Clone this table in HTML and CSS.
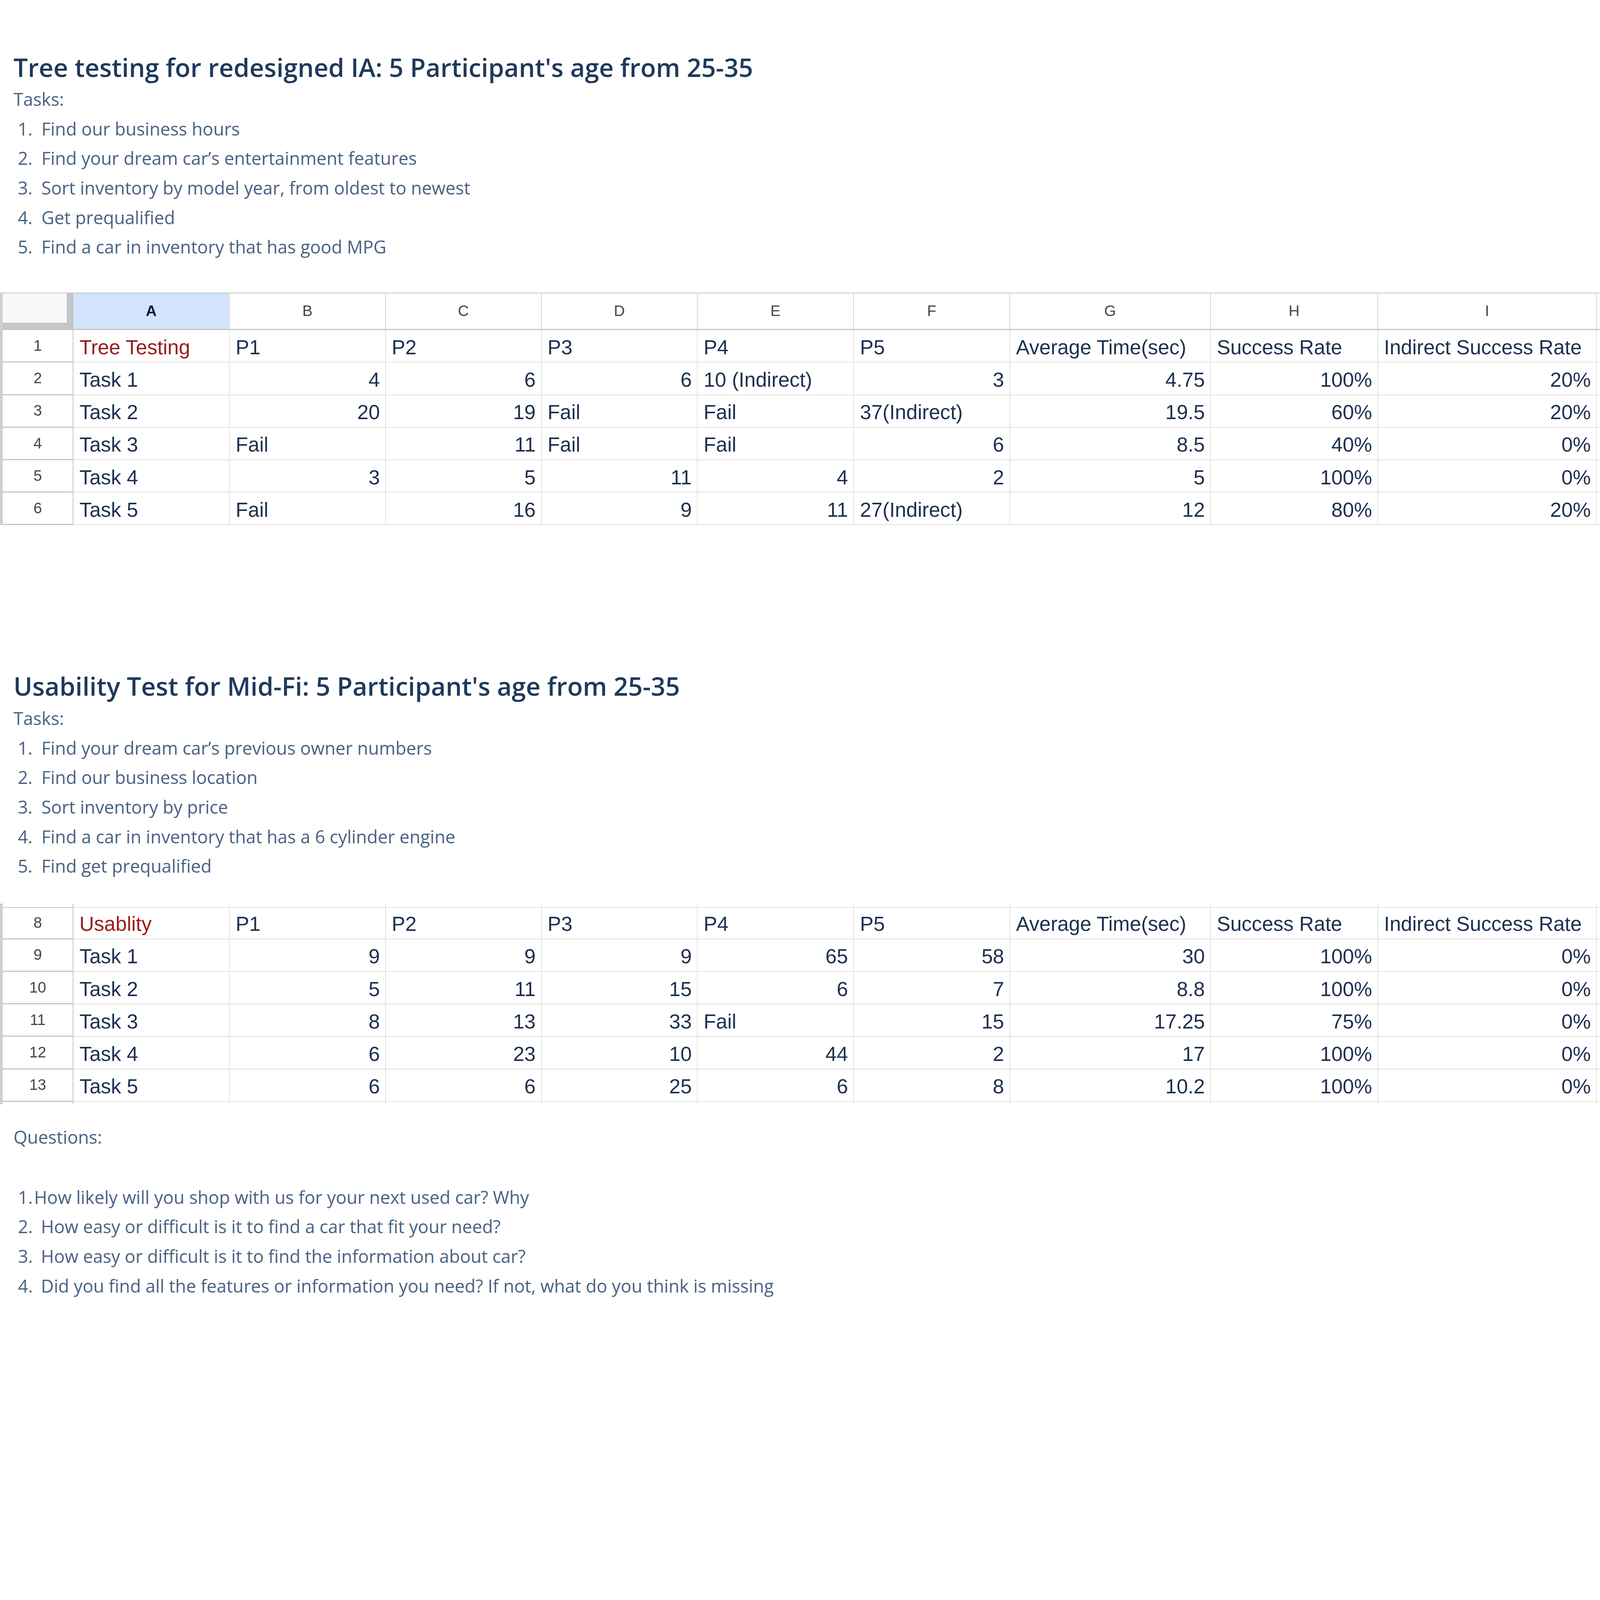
FILE: index.html
```html
<!DOCTYPE html>
<html lang="en">
<head>
<meta charset="utf-8">
<title>Tree testing and usability results</title>
<link rel="stylesheet" href="styles.css">
</head>
<body>
<main class="page">
  <section class="intro intro-tree">
    <h1 class="title">Tree testing for redesigned IA: 5 Participant's age from 25-35</h1>
    <p class="label">Tasks:</p>
    <ol class="steps">
      <li><span class="num">1.</span><span>Find our business hours</span></li>
      <li><span class="num">2.</span><span>Find your dream car’s entertainment features</span></li>
      <li><span class="num">3.</span><span>Sort inventory by model year, from oldest to newest</span></li>
      <li><span class="num">4.</span><span>Get prequalified</span></li>
      <li><span class="num">5.</span><span>Find a car in inventory that has good MPG</span></li>
    </ol>
  </section>

  <div class="sheet sheet-tree">
    <div class="ch corner"></div>
    <div class="ch sel">A</div>
    <div class="ch">B</div>
    <div class="ch">C</div>
    <div class="ch">D</div>
    <div class="ch">E</div>
    <div class="ch">F</div>
    <div class="ch">G</div>
    <div class="ch">H</div>
    <div class="ch">I</div>
    <div class="ch j"></div>

    <div class="c rn">1</div>
    <div class="c red">Tree Testing</div>
    <div class="c">P1</div>
    <div class="c">P2</div>
    <div class="c">P3</div>
    <div class="c">P4</div>
    <div class="c">P5</div>
    <div class="c">Average Time(sec)</div>
    <div class="c">Success Rate</div>
    <div class="c">Indirect Success Rate</div>
    <div class="c j"></div>

    <div class="c rn">2</div>
    <div class="c">Task 1</div>
    <div class="c r">4</div>
    <div class="c r">6</div>
    <div class="c r">6</div>
    <div class="c">10 (Indirect)</div>
    <div class="c r">3</div>
    <div class="c r">4.75</div>
    <div class="c r">100%</div>
    <div class="c r">20%</div>
    <div class="c j"></div>

    <div class="c rn">3</div>
    <div class="c">Task 2</div>
    <div class="c r">20</div>
    <div class="c r">19</div>
    <div class="c">Fail</div>
    <div class="c">Fail</div>
    <div class="c">37(Indirect)</div>
    <div class="c r">19.5</div>
    <div class="c r">60%</div>
    <div class="c r">20%</div>
    <div class="c j"></div>

    <div class="c rn">4</div>
    <div class="c">Task 3</div>
    <div class="c">Fail</div>
    <div class="c r">11</div>
    <div class="c">Fail</div>
    <div class="c">Fail</div>
    <div class="c r">6</div>
    <div class="c r">8.5</div>
    <div class="c r">40%</div>
    <div class="c r">0%</div>
    <div class="c j"></div>

    <div class="c rn">5</div>
    <div class="c">Task 4</div>
    <div class="c r">3</div>
    <div class="c r">5</div>
    <div class="c r">11</div>
    <div class="c r">4</div>
    <div class="c r">2</div>
    <div class="c r">5</div>
    <div class="c r">100%</div>
    <div class="c r">0%</div>
    <div class="c j"></div>

    <div class="c rn">6</div>
    <div class="c">Task 5</div>
    <div class="c">Fail</div>
    <div class="c r">16</div>
    <div class="c r">9</div>
    <div class="c r">11</div>
    <div class="c">27(Indirect)</div>
    <div class="c r">12</div>
    <div class="c r">80%</div>
    <div class="c r">20%</div>
    <div class="c j"></div>
  </div>

  <section class="intro intro-usability">
    <h1 class="title">Usability Test for Mid-Fi: 5 Participant's age from 25-35</h1>
    <p class="label">Tasks:</p>
    <ol class="steps">
      <li><span class="num">1.</span><span>Find your dream car’s previous owner numbers</span></li>
      <li><span class="num">2.</span><span>Find our business location</span></li>
      <li><span class="num">3.</span><span>Sort inventory by price</span></li>
      <li><span class="num">4.</span><span>Find a car in inventory that has a 6 cylinder engine</span></li>
      <li><span class="num">5.</span><span>Find get prequalified</span></li>
    </ol>
  </section>

  <div class="sheet sheet-usability">
    <div class="stub rn-stub"></div>
    <div class="stub"></div>
    <div class="stub"></div>
    <div class="stub"></div>
    <div class="stub"></div>
    <div class="stub"></div>
    <div class="stub"></div>
    <div class="stub"></div>
    <div class="stub"></div>
    <div class="stub"></div>
    <div class="stub j"></div>

    <div class="c rn first">8</div>
    <div class="c red first">Usablity</div>
    <div class="c first">P1</div>
    <div class="c first">P2</div>
    <div class="c first">P3</div>
    <div class="c first">P4</div>
    <div class="c first">P5</div>
    <div class="c first">Average Time(sec)</div>
    <div class="c first">Success Rate</div>
    <div class="c first">Indirect Success Rate</div>
    <div class="c j first"></div>

    <div class="c rn">9</div>
    <div class="c">Task 1</div>
    <div class="c r">9</div>
    <div class="c r">9</div>
    <div class="c r">9</div>
    <div class="c r">65</div>
    <div class="c r">58</div>
    <div class="c r">30</div>
    <div class="c r">100%</div>
    <div class="c r">0%</div>
    <div class="c j"></div>

    <div class="c rn">10</div>
    <div class="c">Task 2</div>
    <div class="c r">5</div>
    <div class="c r">11</div>
    <div class="c r">15</div>
    <div class="c r">6</div>
    <div class="c r">7</div>
    <div class="c r">8.8</div>
    <div class="c r">100%</div>
    <div class="c r">0%</div>
    <div class="c j"></div>

    <div class="c rn">11</div>
    <div class="c">Task 3</div>
    <div class="c r">8</div>
    <div class="c r">13</div>
    <div class="c r">33</div>
    <div class="c">Fail</div>
    <div class="c r">15</div>
    <div class="c r">17.25</div>
    <div class="c r">75%</div>
    <div class="c r">0%</div>
    <div class="c j"></div>

    <div class="c rn">12</div>
    <div class="c">Task 4</div>
    <div class="c r">6</div>
    <div class="c r">23</div>
    <div class="c r">10</div>
    <div class="c r">44</div>
    <div class="c r">2</div>
    <div class="c r">17</div>
    <div class="c r">100%</div>
    <div class="c r">0%</div>
    <div class="c j"></div>

    <div class="c rn">13</div>
    <div class="c">Task 5</div>
    <div class="c r">6</div>
    <div class="c r">6</div>
    <div class="c r">25</div>
    <div class="c r">6</div>
    <div class="c r">8</div>
    <div class="c r">10.2</div>
    <div class="c r">100%</div>
    <div class="c r">0%</div>
    <div class="c j"></div>

    <div class="stub short rn-stub"></div>
    <div class="stub short"></div>
    <div class="stub short"></div>
    <div class="stub short"></div>
    <div class="stub short"></div>
    <div class="stub short"></div>
    <div class="stub short"></div>
    <div class="stub short"></div>
    <div class="stub short"></div>
    <div class="stub short"></div>
    <div class="stub short j"></div>
  </div>

  <section class="questions">
    <p class="label">Questions:</p>
    <ol class="steps q-steps">
      <li><span class="num tight">1.</span><span>How likely will you shop with us for your next used car? Why</span></li>
      <li><span class="num">2.</span><span>How easy or difficult is it to find a car that fit your need?</span></li>
      <li><span class="num">3.</span><span>How easy or difficult is it to find the information about car?</span></li>
      <li><span class="num">4.</span><span>Did you find all the features or information you need? If not, what do you think is missing</span></li>
    </ol>
  </section>
</main>
</body>
</html>
```

FILE: styles.css
```css
/* 1rem = 100 px of the 6766px-wide design, whatever the viewport is */
html {
  font-size: calc(100vw / 67.66);
  margin: 0;
  padding: 0;
  background: #ffffff;
}

body {
  margin: 0;
  padding: 0;
  background: #ffffff;
}

.page {
  width: 100%;
  font-family: "Open Sans", "Liberation Sans", Arial, sans-serif;
}

/* ---------- prose sections ---------- */
.intro {
  padding-left: 0.57rem;
}

.intro-tree {
  padding-top: 2.19rem;
}

.intro-usability {
  margin-top: 6.16rem;
}

.title {
  margin: 0;
  font-size: 1.075rem;
  line-height: 1.3rem;
  font-weight: 600;
  color: #1e395c;
  white-space: nowrap;
}

.label {
  margin: 0.08rem 0 0;
  font-size: 0.75rem;
  line-height: 1.25rem;
  color: #4a6283;
  white-space: nowrap;
}

.steps {
  margin: 0;
  padding: 0 0 0 0.18rem;
  list-style: none;
  font-size: 0.75rem;
  line-height: 1.25rem;
  color: #4a6283;
}

.steps li {
  display: flex;
  white-space: nowrap;
}

.steps .num {
  width: 1.0rem;
  flex: none;
}

.questions {
  margin-top: 0.76rem;
  padding-left: 0.57rem;
}

.questions .label {
  margin: 0;
}

.q-steps {
  margin-top: 1.29rem;
  padding-left: 0.19rem;
}

.q-steps .num {
  width: 0.97rem;
}

.q-steps .num.tight {
  width: 0.68rem;
}

/* ---------- spreadsheet grids ---------- */
.sheet {
  display: grid;
  grid-template-columns: 2.99rem 6.61rem 6.60rem 6.59rem 6.60rem 6.61rem 6.60rem 8.49rem 7.07rem 9.25rem minmax(0, 1fr);
  border-left: 0.12rem solid #cdd0d2;
  font-family: "Liberation Sans", Arial, sans-serif;
}

.sheet-tree {
  margin-top: 1.31rem;
}

.sheet-usability {
  margin-top: 0.96rem;
}

.c {
  box-sizing: border-box;
  height: 1.375rem;
  display: flex;
  align-items: flex-end;
  padding: 0 0.22rem 0.12rem 0.25rem;
  border-right: 0.04rem solid #e1e2e1;
  border-bottom: 0.04rem solid #e1e2e1;
  font-size: 0.86rem;
  line-height: 0.98rem;
  color: #1d3050;
  white-space: nowrap;
  overflow: hidden;
}

.c.r {
  justify-content: flex-end;
}

.c.red {
  color: #9a1c1c;
}

.c.first {
  border-top: 0.04rem solid #e1e2e1;
}

.c.rn {
  justify-content: center;
  align-items: center;
  padding: 0;
  font-size: 0.64rem;
  line-height: 0.74rem;
  color: #444746;
  border-right-color: #bfc3c6;
  border-bottom: 0.05rem solid #c4c7c5;
}

.c.rn.first {
  border-top-color: #c4c7c5;
}

.j {
  border-right: none !important;
  padding: 0 !important;
}

/* column letter header */
.ch {
  box-sizing: border-box;
  height: 1.58rem;
  display: flex;
  align-items: center;
  justify-content: center;
  border-top: 0.04rem solid #c4c7c5;
  border-right: 0.04rem solid #d6d8d7;
  border-bottom: 0.05rem solid #c4c7c5;
  font-size: 0.64rem;
  line-height: 0.74rem;
  color: #444746;
  background: #ffffff;
}

.ch.sel {
  background: #d3e3fd;
  color: #041e49;
  font-weight: 700;
}

.ch.corner {
  background: #f8f9fa;
  border-right: 0.29rem solid #c4c7c5;
  border-bottom: 0.32rem solid #c4c7c5;
}

/* short continuation of grid lines above/below a cropped grid */
.stub {
  box-sizing: border-box;
  height: 0.14rem;
  border-right: 0.04rem solid #e1e2e1;
}

.stub.short {
  height: 0.1rem;
}

.stub.rn-stub {
  border-right-color: #bfc3c6;
}
```
